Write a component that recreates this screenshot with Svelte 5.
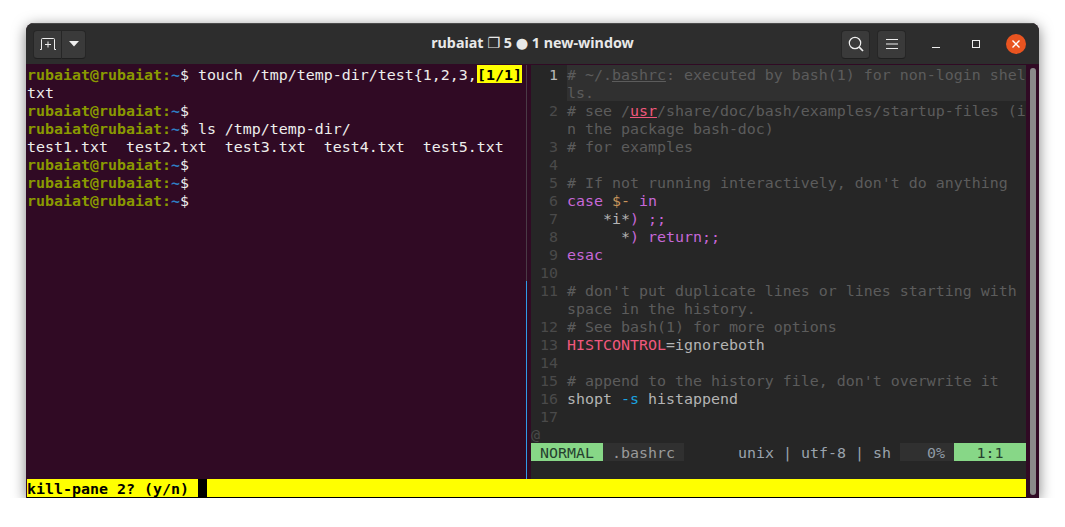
<script>
	// Each segment: [text, class]
	const P = [['rubaiat@rubaiat:', 'host'], ['~', 'tilde'], ['$', '']]

	const shellRows = [
		[...P, [' touch /tmp/temp-dir/test{1,2,3,', '']],
		[['txt', '']],
		[...P],
		[...P, [' ls /tmp/temp-dir/', '']],
		[['test1.txt  test2.txt  test3.txt  test4.txt  test5.txt', '']],
		[...P],
		[...P],
		[...P],
	]

	const codeRows = [
		{ n: 1, cur: true, t: [['# ~/.', 'c'], ['bashrc', 'c u'], [': executed by bash(1) for non-login shel', 'c']] },
		{ cur: true, t: [['ls.', 'c']] },
		{ n: 2, t: [['# see /', 'c'], ['usr', 'pink u'], ['/share/doc/bash/examples/startup-files (i', 'c']] },
		{ t: [['n the package bash-doc)', 'c']] },
		{ n: 3, t: [['# for examples', 'c']] },
		{ n: 4, t: [] },
		{ n: 5, t: [["# If not running interactively, don't do anything", 'c']] },
		{ n: 6, t: [['case', 'kw'], [' ', ''], ['$-', 'var'], [' ', ''], ['in', 'kw']] },
		{ n: 7, t: [['    *i*', ''], [') ;;', 'kw']] },
		{ n: 8, t: [['      *', ''], [') return;;', 'kw']] },
		{ n: 9, t: [['esac', 'kw']] },
		{ n: 10, t: [] },
		{ n: 11, t: [["# don't put duplicate lines or lines starting with", 'c']] },
		{ t: [['space in the history.', 'c']] },
		{ n: 12, t: [['# See bash(1) for more options', 'c']] },
		{ n: 13, t: [['HISTCONTROL', 'pink'], ['=ignoreboth', '']] },
		{ n: 14, t: [] },
		{ n: 15, t: [["# append to the history file, don't overwrite it", 'c']] },
		{ n: 16, t: [['shopt ', ''], ['-s', 'flag'], [' histappend', '']] },
		{ n: 17, t: [] },
	]
</script>

<div class="window">
	<header class="titlebar">
		<div class="btn-group">
			<button class="tb-btn new-tab" aria-label="New tab">
				<svg width="16" height="12" viewBox="0 0 16 12" fill="none" stroke="#eee" stroke-width="1">
					<path d="M0 11.500h1.500V1.500q0-1 1-1h11q1 0 1 1v10H16" />
					<path d="M8 3.500v6M5 6.500h6" />
				</svg>
			</button>
			<button class="tb-btn arrow" aria-label="Tab menu">
				<svg width="10" height="6" viewBox="0 0 10 6"><path d="M0 0h10L5 5.500z" fill="#eee" /></svg>
			</button>
		</div>
		<div class="title">rubaiat ❐ 5 ● 1 new-window</div>
		<div class="right-controls">
			<button class="tb-btn square" aria-label="Search">
				<svg width="16" height="16" viewBox="0 0 16 16" fill="none" stroke="#eee" stroke-width="1.200">
					<circle cx="7" cy="7" r="5.700" />
					<path d="M11.200 11.200l3.800 3.800" stroke-width="1.700" />
				</svg>
			</button>
			<button class="tb-btn square" aria-label="Menu">
				<svg width="12" height="10" viewBox="0 0 12 10" stroke="#eee" stroke-width="1">
					<path d="M0 .5h12M0 5h12M0 9.500h12" />
				</svg>
			</button>
			<div class="win-btns">
				<svg class="min" width="8" height="8" viewBox="0 0 8 8" stroke="#eee" stroke-width="1"><path d="M0 7.500h8" /></svg>
				<svg class="max" width="8" height="8" viewBox="0 0 8 8" fill="none" stroke="#eee" stroke-width="1"><rect x=".5" y=".5" width="7" height="7" /></svg>
				<div class="close">
					<svg width="8" height="8" viewBox="0 0 8 8" stroke="#fff" stroke-width="1.400"><path d="M.5 .5l7 7M7.500 .5l-7 7" /></svg>
				</div>
			</div>
		</div>
	</header>

	<div class="body">
		<div class="screen">
			<div class="panes">
				<section class="shell">
					<div class="search-pos">[1/1]</div>
					{#each shellRows as row}
						<div class="row">{#each row as [text, cls]}<span class={cls}>{text}</span>{/each}</div>
					{/each}
				</section>

				<div class="divider">
					<div class="dim"></div>
					<div class="active"></div>
				</div>

				<section class="vim">
					<div class="code">
						{#each codeRows as line}
							<div class="code-row">
								<span class="num" class:cur-num={line.cur}>{line.n ?? ''}</span>
								<span class="text" class:cur={line.cur}>{#each line.t as [text, cls]}<span class={cls}>{text}</span>{/each}</span>
							</div>
						{/each}
						<div class="row at">@</div>
					</div>
					<div class="statusline">
						<span class="mode">NORMAL</span>
						<span class="file">.bashrc</span>
						<span class="info">unix | utf-8 | sh</span>
						<span class="percent">0%</span>
						<span class="pos">1:1</span>
					</div>
				</section>
			</div>
			<div class="tmux-status">
				<span class="prompt">kill-pane 2? (y/n)</span>
				<span class="cursor"></span>
			</div>
		</div>
		<div class="scrollbar"><div class="thumb"></div></div>
	</div>
</div>

<style>
	:global(body) {
		background: #fff;
	}

	.window {
		box-sizing: border-box;
		width: 1013px;
		height: 475px;
		margin: 23px 0 0 26px;
		display: flex;
		flex-direction: column;
		background: #300a24;
		border-radius: 8px 8px 0 0;
		box-shadow: 0 3px 14px rgba(0, 0, 0, 0.5);
		overflow: hidden;
	}

	.titlebar {
		height: 41px;
		flex: none;
		display: flex;
		align-items: center;
		justify-content: space-between;
		position: relative;
		padding: 0 13px 0 7px;
		background: #2d2d2d;
		border-top: 1px solid #4a4a4a;
		box-sizing: border-box;
	}

	.title {
		position: absolute;
		left: 0;
		right: 0;
		top: 10px;
		text-align: center;
		font: bold 14.300px 'Noto Sans', 'DejaVu Sans', sans-serif;
		color: #e8e8e8;
		line-height: 18px;
	}

	.btn-group {
		display: flex;
	}

	.tb-btn {
		display: flex;
		align-items: center;
		justify-content: center;
		height: 29px;
		padding: 0;
		background: #3a3a3a;
		border: 1px solid #262626;
		border-bottom-color: #1f1f1f;
	}

	.new-tab {
		width: 29px;
		border-radius: 4px 0 0 4px;
	}

	.arrow {
		width: 24px;
		border-left: none;
		border-radius: 0 4px 4px 0;
	}

	.square {
		width: 29px;
		border-radius: 4px;
	}

	.right-controls {
		display: flex;
		align-items: center;
		gap: 7px;
	}

	.win-btns {
		display: flex;
		align-items: center;
		gap: 26px;
		margin-left: 19px;
	}

	.max {
		margin-left: 6px;
	}

	.close {
		width: 20px;
		height: 20px;
		border-radius: 50%;
		background: #e95420;
		display: flex;
		align-items: center;
		justify-content: center;
	}

	.body {
		flex: 1;
		display: flex;
		min-height: 0;
		padding-top: 1px;
		/* rows stay 18px tall, the taller line box drops glyphs to the right baseline */
		font: 14.950px/20px 'DejaVu Sans Mono', 'Liberation Mono', monospace;
		color: #eeeeec;
	}

	.screen {
		width: 999px;
		margin-left: 1px;
		display: flex;
		flex-direction: column;
	}

	.panes {
		flex: 1;
		display: flex;
		min-height: 0;
	}

	.shell {
		width: 495px;
		position: relative;
	}

	.row {
		height: 18px;
		white-space: pre;
	}

	.host {
		color: #8a9a00;
		font-weight: bold;
	}

	.tilde {
		color: #2f7fc4;
		font-weight: bold;
	}

	.search-pos {
		position: absolute;
		right: 0;
		top: 0;
		width: 45px;
		height: 18px;
		background: #ffff00;
		color: #000;
		font-weight: bold;
	}

	.divider {
		width: 9px;
		display: flex;
		flex-direction: column;
		align-items: center;
	}

	.divider .dim {
		width: 1px;
		height: 216px;
		background: #4a3a46;
	}

	.divider .active {
		width: 1px;
		flex: 1;
		background: #2f9be8;
	}

	.vim {
		width: 495px;
		background: #262626;
		display: flex;
		flex-direction: column;
		color: #b0b0b0;
	}

	.code {
		height: 378px;
	}

	.code-row {
		display: flex;
		height: 18px;
		white-space: pre;
	}

	.num {
		width: 27px;
		margin-right: 9px;
		text-align: right;
		color: #4a4a4a;
	}

	.cur-num {
		color: #b8b8b8;
	}

	.text {
		flex: 1;
		color: #b4b4b4;
	}

	.text.cur {
		background: #303030;
	}

	.c {
		color: #5c5c5c;
	}

	.u {
		text-decoration: underline;
	}

	.pink {
		color: #f0587c;
	}

	.kw {
		color: #c668d8;
	}

	.var {
		color: #c8955c;
	}

	.flag {
		color: #1aa3e0;
	}

	.at {
		color: #4a4a4a;
	}

	.statusline {
		display: flex;
		height: 18px;
		color: #8f9aa5;
		white-space: pre;
	}

	.mode {
		width: 63px;
		padding-left: 9px;
		background: #87d787;
		color: #26402f;
	}

	.file {
		width: 72px;
		padding-left: 9px;
		background: #303030;
		color: #9a9a9a;
	}

	.info {
		flex: 1;
		text-align: right;
		padding-right: 9px;
		color: #9aa3ad;
	}

	.percent {
		width: 45px;
		padding-right: 9px;
		text-align: right;
		background: #303030;
	}

	.pos {
		width: 72px;
		text-align: center;
		background: #87d787;
		color: #26402f;
	}

	.tmux-status {
		height: 18px;
		flex: none;
		display: flex;
		background: #ffff00;
		color: #000;
		font-weight: bold;
		border-bottom: 1px solid #000;
	}

	.prompt {
		width: 171px;
		white-space: pre;
	}

	.cursor {
		width: 9px;
		background: #000;
	}

	.scrollbar {
		flex: 1;
		display: flex;
		justify-content: center;
		padding: 3px 0;
	}

	.thumb {
		width: 6px;
		background: #8a8a8a;
		border-radius: 3px;
	}
</style>
